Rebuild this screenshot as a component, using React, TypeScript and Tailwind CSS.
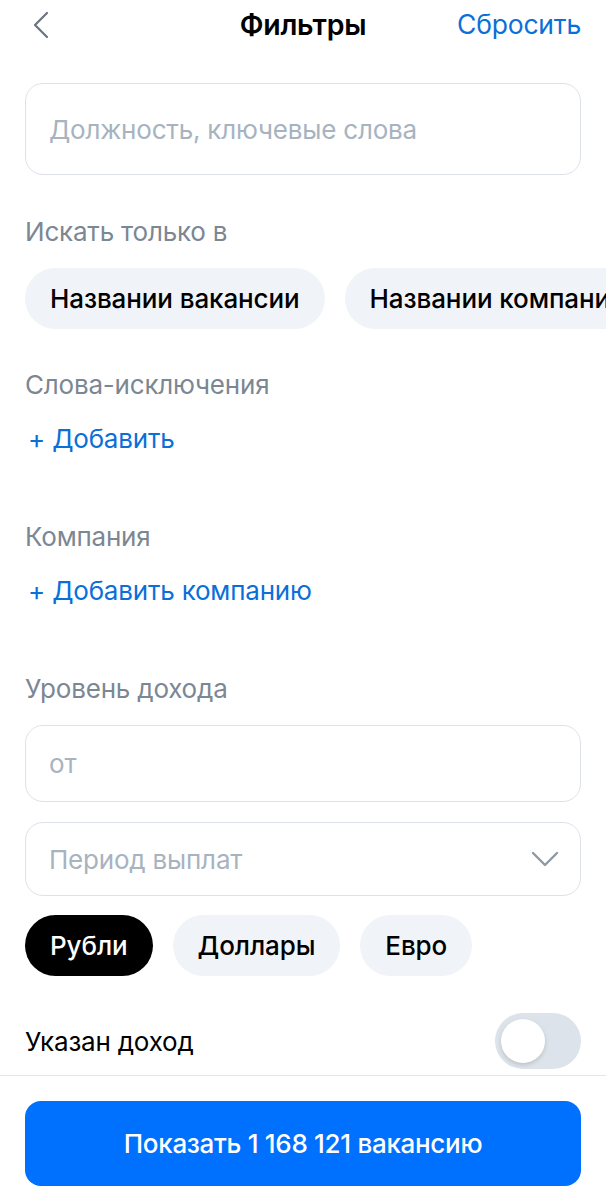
import { ChevronLeft, ChevronDown } from "lucide-react";

const font = { fontFamily: "Inter, 'Noto Sans', sans-serif" };

const Label = ({ children }: { children: React.ReactNode }) => (
  <p className="text-[26px] leading-7 text-[#7b8793] tracking-[-0.2px]">{children}</p>
);

const AddLink = ({ children }: { children: React.ReactNode }) => (
  <p className="text-[26px] leading-7 text-[#0b6fd8] tracking-[-0.2px]">
    <span className="ml-[3px]">+</span> {children}
  </p>
);

const Chip = ({ label, active }: { label: string; active?: boolean }) => (
  <div
    className={`h-[61px] shrink-0 px-[25px] rounded-full flex items-center text-[26px] font-medium whitespace-nowrap tracking-[-0.1px] ${
      active ? "bg-black text-white" : "bg-[#f0f3f7] text-black"
    }`}
  >
    {label}
  </div>
);

export default function App() {
  return (
    <div className="w-[606px] h-[1200px] bg-white overflow-hidden flex flex-col" style={font}>
      {/* header */}
      <div className="h-[50px] px-[25px] flex items-center justify-between relative">
        <ChevronLeft className="w-12 h-12 text-[#6b7580] -ml-[8px]" strokeWidth={1.1} />
        <h1 className="absolute left-1/2 -translate-x-1/2 text-[28.5px] font-semibold text-black tracking-[-0.3px]">
          Фильтры
        </h1>
        <span className="text-[26.5px] text-[#0b6fd8] tracking-[-0.2px]">Сбросить</span>
      </div>

      <div className="flex-1 px-[25px]">
        {/* search */}
        <div className="mt-[33px] h-[92px] rounded-[18px] border border-[#dde2e8] flex items-center px-[23px] text-[26px] text-[#a7b3bf] tracking-[-0.2px]">
          Должность, ключевые слова
        </div>

        <div className="mt-[43px]">
          <Label>Искать только в</Label>
        </div>
        {/* second chip runs past the screen edge, as in the app */}
        <div className="mt-[22px] flex gap-5 -mr-[25px] overflow-hidden">
          <Chip label="Названии вакансии" />
          <Chip label="Названии компании" />
        </div>

        <div className="mt-[42px]">
          <Label>Слова-исключения</Label>
        </div>
        <div className="mt-[26px]">
          <AddLink>Добавить</AddLink>
        </div>

        <div className="mt-[70px]">
          <Label>Компания</Label>
        </div>
        <div className="mt-[26px]">
          <AddLink>Добавить компанию</AddLink>
        </div>

        <div className="mt-[70px]">
          <Label>Уровень дохода</Label>
        </div>

        <div className="mt-[22px] h-[77px] rounded-[18px] border border-[#dde2e8] flex items-center px-[23px] text-[26px] text-[#a7b3bf]">
          от
        </div>
        <div className="mt-[20px] h-[74px] rounded-[18px] border border-[#dde2e8] flex items-center justify-between pl-[23px] pr-[11px] text-[26px] text-[#a7b3bf] tracking-[-0.2px]">
          <span>Период выплат</span>
          <ChevronDown className="w-12 h-12 text-[#8e99a4]" strokeWidth={1.2} />
        </div>

        <div className="mt-[19px] flex gap-5">
          <Chip label="Рубли" active />
          <Chip label="Доллары" />
          <Chip label="Евро" />
        </div>

        <div className="mt-[37px] flex items-center justify-between">
          <span className="text-[26px] text-black tracking-[-0.2px]">Указан доход</span>
          <div className="w-[86px] h-[56px] rounded-full bg-[#dde3ea] p-[6px] flex items-center">
            <div className="w-[44px] h-[44px] rounded-full bg-white shadow-[0_2px_4px_rgba(0,0,0,0.15)]" />
          </div>
        </div>
      </div>

      {/* footer */}
      <div className="border-t border-[#e3e6ea] px-[25px] pt-[25px] pb-[14px]">
        <button className="w-full h-[85px] rounded-[16px] bg-[#0070ff] text-white text-[26px] font-medium tracking-[-0.3px]">
          Показать 1 168 121 вакансию
        </button>
      </div>
    </div>
  );
}
